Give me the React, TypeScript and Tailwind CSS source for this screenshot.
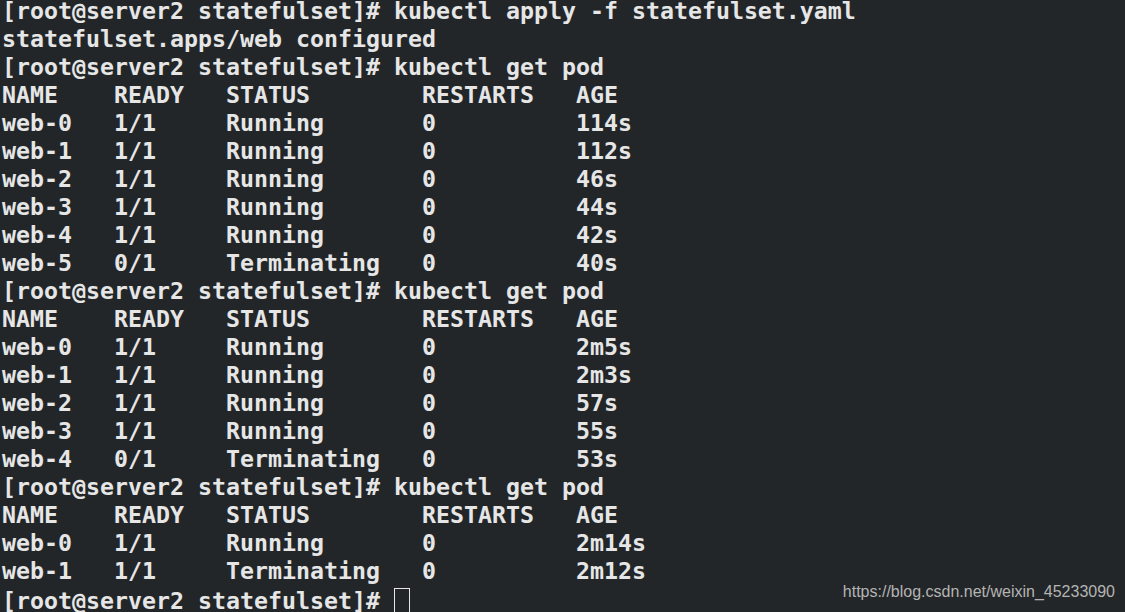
const lines = [
  "[root@server2 statefulset]# kubectl apply -f statefulset.yaml",
  "statefulset.apps/web configured",
  "[root@server2 statefulset]# kubectl get pod",
  "NAME    READY   STATUS        RESTARTS   AGE",
  "web-0   1/1     Running       0          114s",
  "web-1   1/1     Running       0          112s",
  "web-2   1/1     Running       0          46s",
  "web-3   1/1     Running       0          44s",
  "web-4   1/1     Running       0          42s",
  "web-5   0/1     Terminating   0          40s",
  "[root@server2 statefulset]# kubectl get pod",
  "NAME    READY   STATUS        RESTARTS   AGE",
  "web-0   1/1     Running       0          2m5s",
  "web-1   1/1     Running       0          2m3s",
  "web-2   1/1     Running       0          57s",
  "web-3   1/1     Running       0          55s",
  "web-4   0/1     Terminating   0          53s",
  "[root@server2 statefulset]# kubectl get pod",
  "NAME    READY   STATUS        RESTARTS   AGE",
  "web-0   1/1     Running       0          2m14s",
  "web-1   1/1     Terminating   0          2m12s",
];

export default function App() {
  return (
    <div className="relative w-[1125px] h-[612px] overflow-hidden bg-[#232629]">
      <div
        className="-mt-[3px] pl-[2px] text-[23.25px] leading-[28px] font-bold text-[#e6e6e6]"
        style={{ fontFamily: '"DejaVu Sans Mono", monospace' }}
      >
        {lines.map((l, i) => (
          <div key={i} className="whitespace-pre">
            {l}
          </div>
        ))}
        <div className="flex items-center whitespace-pre">
          <span>[root@server2 statefulset]# </span>
          <span className="inline-block w-[16px] h-[28px] border border-[#e6e6e6] mt-[3px]" />
        </div>
      </div>
      <div
        className="absolute right-[10px] bottom-[8px] text-[16px] text-[#b4b4b4]"
        style={{ fontFamily: '"Liberation Sans", Arial, sans-serif' }}
      >
        https://blog.csdn.net/weixin_45233090
      </div>
    </div>
  );
}
